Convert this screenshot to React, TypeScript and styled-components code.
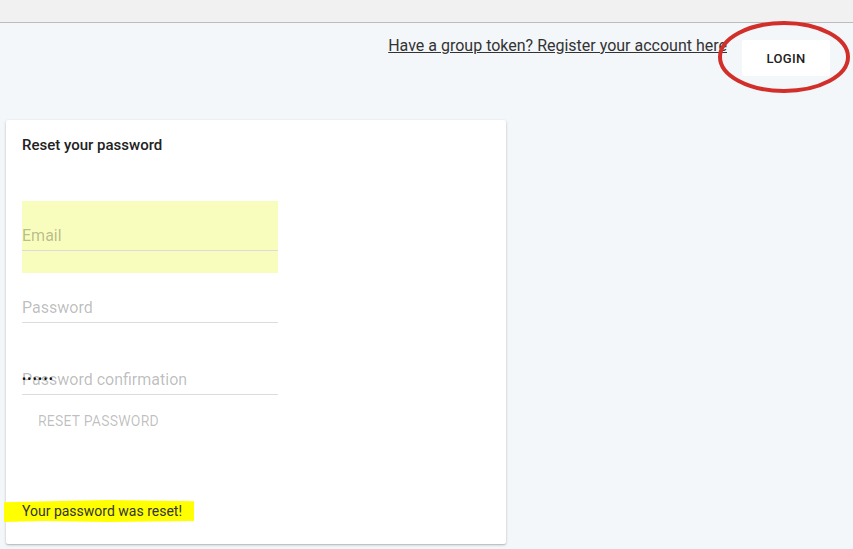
import * as React from 'react';
import styled, { createGlobalStyle } from 'styled-components';

const GlobalStyle = createGlobalStyle`
    html, body {
        margin: 0;
        padding: 0;
        height: 100%;
        background: #f3f7fa;
        font-family: Roboto, 'Liberation Sans', Arial, sans-serif;
    }
    #root {
        min-height: 100%;
    }
`;

const Page = styled.div`
    display: flex;
    flex-direction: column;
    min-height: 549px;
    background: #f3f7fa;
`;

const TopBand = styled.div`
    height: 22px;
    background: #f1f1f1;
    border-bottom: 1px solid #bcbcbc;
`;

const Header = styled.div`
    display: flex;
    justify-content: flex-end;
    align-items: flex-start;
    gap: 15px;
    padding: 0 23px 0 0;
    height: 52px;
`;

const RegisterLink = styled.a`
    margin-top: 13px;
    font-size: 16px;
    line-height: 19px;
    color: #333333;
    text-decoration: underline;
    cursor: pointer;
`;

const LoginWrap = styled.div`
    position: relative;
    margin-top: 17px;
`;

const LoginButton = styled.button`
    display: flex;
    align-items: center;
    justify-content: center;
    width: 88px;
    height: 36px;
    border: none;
    border-radius: 2px;
    background: #ffffff;
    color: #222222;
    font-family: Roboto, 'Liberation Sans', Arial, sans-serif;
    font-size: 13px;
    font-weight: 500;
    letter-spacing: 0.3px;
`;

const Circle = styled.svg`
    position: absolute;
    left: -25px;
    top: -20px;
    width: 136px;
    height: 75px;
    pointer-events: none;
    overflow: visible;
`;

const Main = styled.div`
    padding: 45px 0 5px 6px;
`;

const Card = styled.div`
    width: 500px;
    box-sizing: border-box;
    padding: 14px 16px 22px 16px;
    background: #ffffff;
    border-radius: 2px;
    box-shadow: 0 1px 3px rgba(0, 0, 0, 0.2), 0 1px 1px rgba(0, 0, 0, 0.1);
`;

const Title = styled.h2`
    margin: 0 0 45px 0;
    font-size: 15px;
    line-height: 22px;
    font-weight: 500;
    color: #222222;
`;

const Form = styled.form`
    display: flex;
    flex-direction: column;
    align-items: flex-start;
`;

const Field = styled.div<{ highlight?: boolean }>`
    position: relative;
    width: 256px;
    height: 72px;
    box-sizing: border-box;
    padding-top: 18px;
    background: ${(props) => (props.highlight ? '#f8fdbd' : 'transparent')};
`;

const InputLine = styled.div`
    position: relative;
    height: 32px;
    box-sizing: border-box;
    padding: 7px 0 6px 0;
    border-bottom: 1px solid #dcdcdc;
    font-size: 16px;
    line-height: 19px;
    color: rgba(0, 0, 0, 0.27);
`;

const Dots = styled.span`
    position: absolute;
    left: 0;
    top: 9px;
    font-size: 12px;
    line-height: 14px;
    letter-spacing: 1.3px;
    color: #111111;
`;

const ResetButton = styled.button`
    margin-top: -14px;
    height: 36px;
    padding: 0 16px;
    border: none;
    background: transparent;
    color: rgba(0, 0, 0, 0.26);
    font-family: Roboto, 'Liberation Sans', Arial, sans-serif;
    font-size: 14px;
    font-weight: 400;
    letter-spacing: 0.2px;
`;

const Message = styled.div`
    margin-top: 61px;
    font-size: 14px;
    line-height: 20px;
    color: #333333;
`;

const Marker = styled.span`
    display: inline-block;
    margin-left: -18px;
    padding: 1px 12px 1px 18px;
    background: #ffff00;
    clip-path: polygon(0 10%, 30% 4%, 55% 0, 100% 6%, 100% 96%, 55% 100%, 20% 96%, 0 100%);
`;

export default function App() {
    return (
        <>
            <GlobalStyle />
            <Page>
                <TopBand />
                <Header>
                    <RegisterLink>Have a group token? Register your account here</RegisterLink>
                    <LoginWrap>
                        <LoginButton>LOGIN</LoginButton>
                        <Circle viewBox="0 0 136 75">
                            <ellipse cx="67" cy="37" rx="64" ry="34" fill="none" stroke="#d32f2a" strokeWidth="4" />
                        </Circle>
                    </LoginWrap>
                </Header>
                <Main>
                    <Card>
                        <Title>Reset your password</Title>
                        <Form>
                            <Field highlight>
                                <InputLine>Email</InputLine>
                            </Field>
                            <Field>
                                <InputLine>Password</InputLine>
                            </Field>
                            <Field>
                                <InputLine>
                                    Password confirmation
                                    <Dots>••••••</Dots>
                                </InputLine>
                            </Field>
                            <ResetButton type="button">RESET PASSWORD</ResetButton>
                        </Form>
                        <Message>
                            <Marker>Your password was reset!</Marker>
                        </Message>
                    </Card>
                </Main>
            </Page>
        </>
    );
}
